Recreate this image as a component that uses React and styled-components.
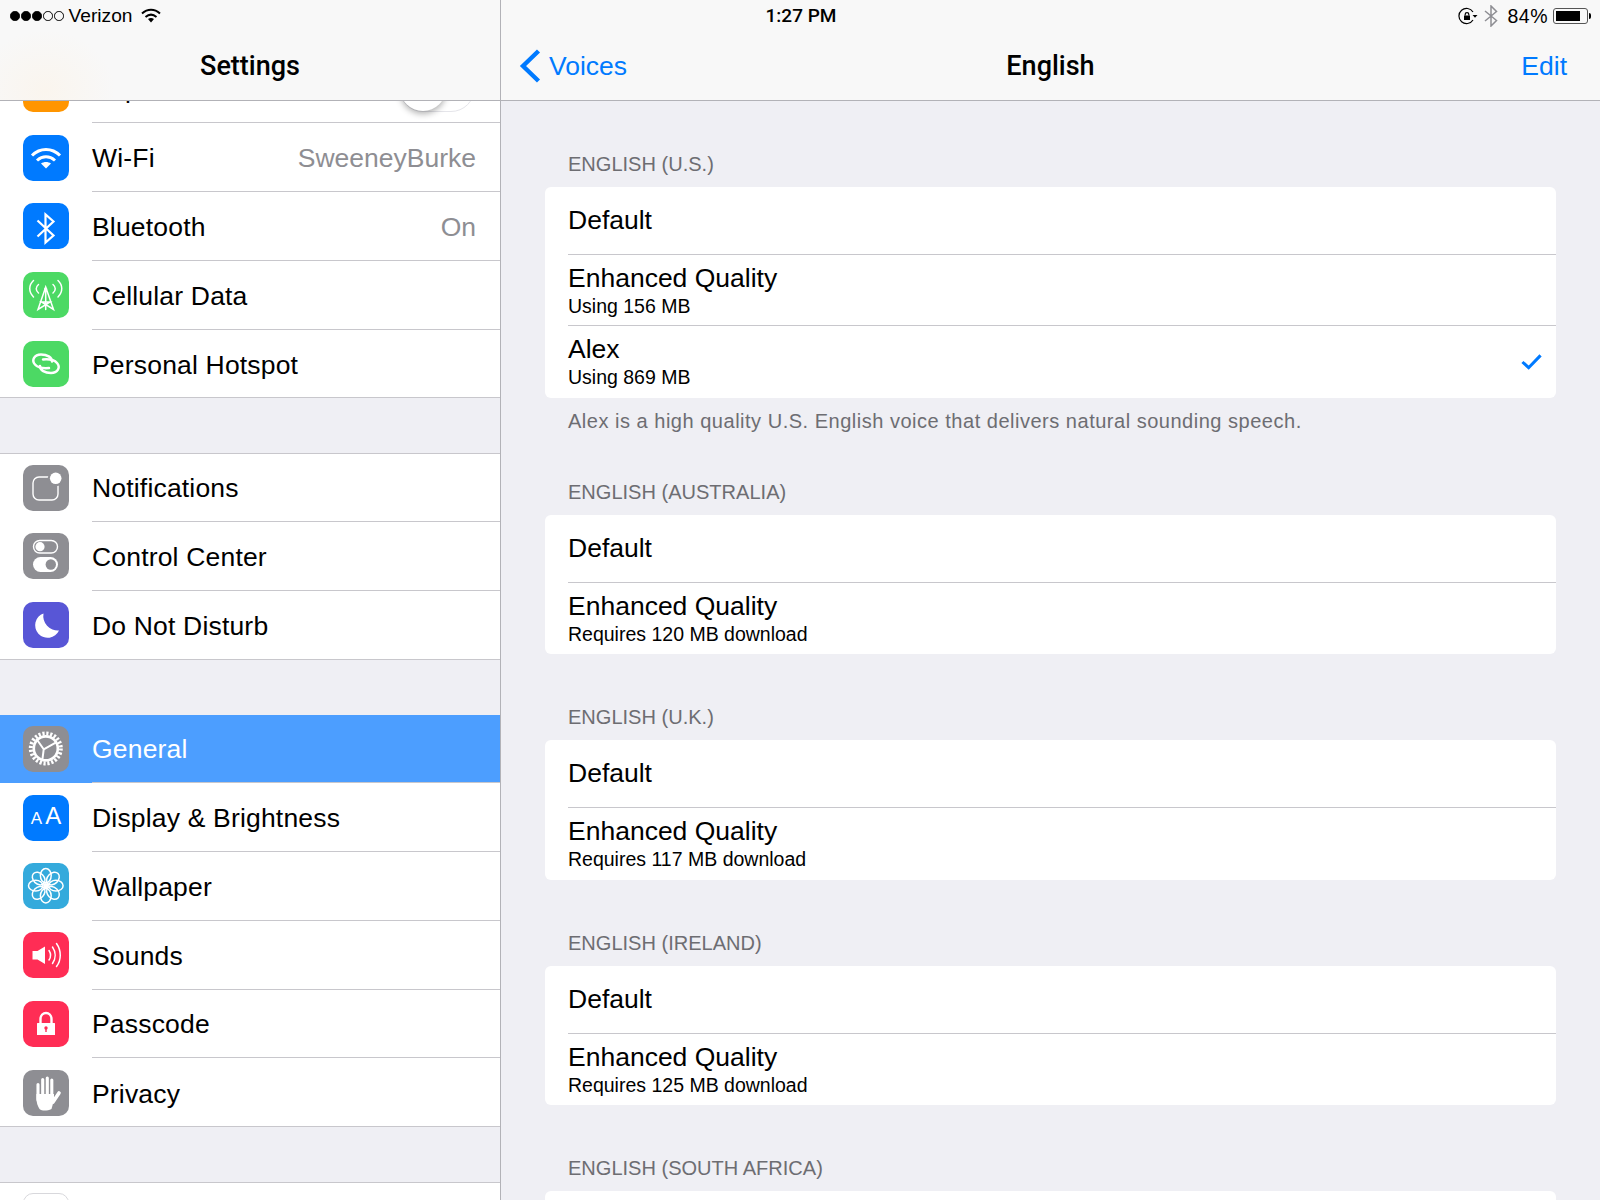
import React from 'react'
import styled, { createGlobalStyle } from 'styled-components'

const GlobalStyle = createGlobalStyle`
  html, body { margin: 0; padding: 0; background: #efeff4; }
  * { box-sizing: border-box; }
  body { font-family: "Liberation Sans", Arial, sans-serif; color: #000; }
`

const WifiGlyph = ({ size = 46 }) => (
  <svg width={size} height={size} viewBox="0 0 46 46" fill="none" stroke="#fff" strokeWidth="3">
    <path d="M9 20.5 C17 12.5 29 12.5 37 20.5" />
    <path d="M14 25.5 C19.5 20.5 26.5 20.5 32 25.5" />
    <path d="M18 28.5 C21 26.5 25 26.5 28 28.5 L23 33.5 Z" fill="#fff" stroke="none" />
  </svg>
)

const BluetoothGlyph = () => (
  <svg width="46" height="46" viewBox="0 0 46 46" fill="none" stroke="#fff" strokeWidth="2.2">
    <path d="M14.5 17.5 L30.5 32.5 L22.5 39.5 V11.5 L30.5 18.5 L14.5 33.5" />
  </svg>
)

const CellularGlyph = () => (
  <svg width="46" height="46" viewBox="0 0 46 46" fill="none" stroke="#fff" strokeWidth="1.5" strokeLinecap="round">
    <path d="M10.5 8.5 C5.5 13 5.5 20 10.5 25" />
    <path d="M35 8.5 C40 13 40 20 35 25" />
    <path d="M15.5 12.5 C12.5 15 12.5 18.5 15.5 21" />
    <path d="M30 12.5 C33 15 33 18.5 30 21" />
    <path d="M22.7 15 L15 37.5 L27 30 H18.5 L30.5 37.5 Z M22.7 15 V37.5" />
    <circle cx="22.7" cy="17" r="1.6" fill="#fff" stroke="none" />
  </svg>
)

const HotspotGlyph = () => (
  <svg width="46" height="46" viewBox="0 0 46 46" fill="none" stroke="#fff" strokeWidth="2.5" strokeLinecap="round">
    <path d="M26 27 C20 27.5 15 27 12 23.5 C8 19 11.5 13.5 18 13.5 C24 13.5 29 16 29 20.5" />
    <path d="M20 18.5 C26 18 31 18.5 34 22 C38 26.5 34.5 32 28 32 C22 32 17 29.5 17 25" />
  </svg>
)

const NotificationsGlyph = () => (
  <svg width="46" height="46" viewBox="0 0 46 46" fill="none">
    <rect x="10" y="12" width="25" height="23" rx="6" stroke="#fff" strokeWidth="1.4" />
    <circle cx="32.7" cy="13.3" r="8" fill="#8e8e93" />
    <circle cx="32.7" cy="13.3" r="5.8" fill="#fff" />
  </svg>
)

const ControlGlyph = () => (
  <svg width="46" height="46" viewBox="0 0 46 46" fill="none">
    <rect x="10.5" y="7.5" width="24" height="12.5" rx="6.25" stroke="#fff" strokeWidth="1.4" />
    <circle cx="17" cy="13.7" r="4.6" fill="#fff" />
    <rect x="10" y="24" width="25" height="15" rx="7.5" fill="#fff" />
    <circle cx="27.8" cy="31.5" r="5.2" fill="#8e8e93" />
  </svg>
)

const MoonGlyph = () => (
  <svg width="46" height="46" viewBox="0 0 46 46">
    <path d="M20.5 11.5 A12.5 12.5 0 1 0 36 28.5 A14.5 14.5 0 0 1 20.5 11.5 Z" fill="#fff" />
  </svg>
)

const GearGlyph = () => (
  <svg width="46" height="46" viewBox="0 0 46 46" fill="none" stroke="#fff">
    <circle cx="22.8" cy="22.4" r="15" strokeWidth="4" strokeDasharray="2.2 1.73" />
    <circle cx="22.8" cy="22.4" r="12" strokeWidth="2.6" />
    <path d="M20.7 23.3 L32.7 16.7 M20.7 23.3 L19.3 34.3 M20.7 23.3 L13.3 12.7" strokeWidth="2" />
  </svg>
)

const FlowerGlyph = () => (
  <svg width="46" height="46" viewBox="0 0 46 46" fill="none" stroke="#fff" strokeWidth="1.5">
    {[0, 45, 90, 135, 180, 225, 270, 315].map(a => (
      <ellipse key={a} cx="22.8" cy="12.6" rx="5.4" ry="7.2" transform={`rotate(${a} 22.8 22.7)`} />
    ))}
    <circle cx="22.8" cy="22.7" r="2.6" fill="#fff" stroke="none" />
  </svg>
)

const SoundGlyph = () => (
  <svg width="46" height="46" viewBox="0 0 46 46" fill="none" stroke="#fff" strokeWidth="1.5" strokeLinecap="round">
    <path d="M9.5 19 H14.5 L22 14.5 V32 L14.5 27.5 H9.5 Z" fill="#fff" stroke="none" />
    <path d="M26 18.5 C28 21.5 28 25 26 28" />
    <path d="M29.5 15 C33 20 33 26.5 29.5 31.5" />
    <path d="M33.5 11.5 C38.5 18.5 38.5 28 33.5 34.5" />
  </svg>
)

const LockGlyph = () => (
  <svg width="46" height="46" viewBox="0 0 46 46" fill="none">
    <path d="M17.5 23 V18 C17.5 10 28.5 10 28.5 18 V23" stroke="#fff" strokeWidth="2.4" />
    <rect x="14" y="22" width="18" height="12" rx="0.6" fill="#fff" />
    <circle cx="23" cy="27" r="1.7" fill="#ff2d55" />
    <rect x="22.3" y="27" width="1.4" height="4" fill="#ff2d55" />
  </svg>
)

const HandGlyph = () => (
  <svg width="46" height="46" viewBox="0 0 46 46" fill="none" stroke="#fff" strokeWidth="3.1" strokeLinecap="round">
    <path d="M15 14.5 V30 M19.7 9.5 V26 M24.3 8 V26 M28.8 10 V27" />
    <path d="M30 32 L36 23" strokeWidth="3.6" />
    <path d="M13.4 24 H31 V30 L28.5 39 C24 41 19 41 16.5 39 C14.5 36 13.4 32 13.4 28 Z" fill="#fff" stroke="none" />
  </svg>
)

const AaGlyph = () => <AaMark>A<b>A</b></AaMark>

const rowsTop = [
  { label: 'Wi-Fi', color: '#007aff', glyph: <WifiGlyph />, detail: 'SweeneyBurke' },
  { label: 'Bluetooth', color: '#007aff', glyph: <BluetoothGlyph />, detail: 'On' },
  { label: 'Cellular Data', color: '#4cd964', glyph: <CellularGlyph /> },
  { label: 'Personal Hotspot', color: '#4cd964', glyph: <HotspotGlyph /> },
]

const rowsMiddle = [
  { label: 'Notifications', color: '#8e8e93', glyph: <NotificationsGlyph /> },
  { label: 'Control Center', color: '#8e8e93', glyph: <ControlGlyph /> },
  { label: 'Do Not Disturb', color: '#5856d6', glyph: <MoonGlyph /> },
]

const rowsBottom = [
  { label: 'General', color: '#8e8e93', glyph: <GearGlyph />, selected: true },
  { label: 'Display & Brightness', color: '#007aff', glyph: <AaGlyph /> },
  { label: 'Wallpaper', color: '#34aadc', glyph: <FlowerGlyph /> },
  { label: 'Sounds', color: '#ff2d55', glyph: <SoundGlyph /> },
  { label: 'Passcode', color: '#ff2d55', glyph: <LockGlyph /> },
  { label: 'Privacy', color: '#8e8e93', glyph: <HandGlyph /> },
]

const sections = [
  {
    title: 'ENGLISH (U.S.)',
    voices: [
      { name: 'Default' },
      { name: 'Enhanced Quality', note: 'Using 156 MB' },
      { name: 'Alex', note: 'Using 869 MB', checked: true },
    ],
    footer: 'Alex is a high quality U.S. English voice that delivers natural sounding speech.',
  },
  {
    title: 'ENGLISH (AUSTRALIA)',
    voices: [{ name: 'Default' }, { name: 'Enhanced Quality', note: 'Requires 120 MB download' }],
  },
  {
    title: 'ENGLISH (U.K.)',
    voices: [{ name: 'Default' }, { name: 'Enhanced Quality', note: 'Requires 117 MB download' }],
  },
  {
    title: 'ENGLISH (IRELAND)',
    voices: [{ name: 'Default' }, { name: 'Enhanced Quality', note: 'Requires 125 MB download' }],
  },
  {
    title: 'ENGLISH (SOUTH AFRICA)',
    voices: [{ name: 'Default' }],
  },
]

const SettingsGroup = ({ rows }) => (
  <Group>
    {rows.map(row => (
      <Row key={row.label} $selected={row.selected}>
        <IconTile $color={row.color}>{row.glyph}</IconTile>
        <RowBody>
          <RowLabel>{row.label}</RowLabel>
          {row.detail && <RowDetail>{row.detail}</RowDetail>}
        </RowBody>
      </Row>
    ))}
  </Group>
)

const App = () => {
  return (
    <Screen>
      <GlobalStyle />
      <StatusBar>
        <StatusLeft>
          <Dot /><Dot /><Dot /><Dot $off /><Dot $off />
          <Carrier>Verizon</Carrier>
          <svg width="22" height="18" viewBox="0 0 22 18" fill="none" stroke="#000" strokeWidth="2">
            <path d="M2 6.5 C7.5 1.5 14.5 1.5 20 6.5" />
            <path d="M5.5 10 C9 7 13 7 16.5 10" />
            <path d="M8 12 C10 10.6 12 10.6 14 12 L11 15.5 Z" fill="#000" stroke="none" />
          </svg>
        </StatusLeft>
        <Clock>1:27 PM</Clock>
        <StatusRight>
          <RotationIcon width="20" height="18" viewBox="0 0 20 18" fill="none" stroke="#000" strokeWidth="1.2">
            <path d="M15 13 A7.6 7.6 0 1 1 15 5" />
            <path d="M14.5 8 H19.5 L17 10.8 Z" fill="#000" stroke="none" />
            <rect x="6" y="8.5" width="6" height="4.5" fill="#000" stroke="none" />
            <path d="M7.2 8.5 V7.2 C7.2 5.2 10.8 5.2 10.8 7.2 V8.5" />
          </RotationIcon>
          <svg width="14" height="22" viewBox="0 0 14 22" fill="none" stroke="#8e8e93" strokeWidth="1.5">
            <path d="M1 6 L12.5 15.5 L7 21 V1 L12.5 6.5 L1 16" />
          </svg>
          <Percent>84%</Percent>
          <Battery>
            <BatteryFill style={{ width: '84%' }} />
          </Battery>
        </StatusRight>
      </StatusBar>

      <Sidebar>
        <Nav $tinted>
          <NavTitle>Settings</NavTitle>
        </Nav>
        <SidebarScroll>
          <Group>
            <Row>
              <IconTile $color="#ff9500" />
              <RowBody>
                <RowLabel>Airplane Mode</RowLabel>
                <Switch />
              </RowBody>
            </Row>
            {rowsTop.map(row => (
              <Row key={row.label}>
                <IconTile $color={row.color}>{row.glyph}</IconTile>
                <RowBody>
                  <RowLabel>{row.label}</RowLabel>
                  {row.detail && <RowDetail>{row.detail}</RowDetail>}
                </RowBody>
              </Row>
            ))}
          </Group>
          <SettingsGroup rows={rowsMiddle} />
          <SettingsGroup rows={rowsBottom} />
          <Group>
            <Row>
              <IconTile $color="#fff" $outlined />
              <RowBody>
                <RowLabel>iCloud</RowLabel>
              </RowBody>
            </Row>
          </Group>
        </SidebarScroll>
      </Sidebar>

      <Detail>
        <Nav>
          <BackLink>
            <svg width="22" height="34" viewBox="0 0 22 34" fill="none" stroke="#007aff" strokeWidth="4.4">
              <path d="M19.5 2 L4 17 L19.5 32" />
            </svg>
            Voices
          </BackLink>
          <NavTitle>English</NavTitle>
          <EditLink>Edit</EditLink>
        </Nav>
        <DetailScroll>
          {sections.map(section => (
            <section key={section.title}>
              <SectionLabel>{section.title}</SectionLabel>
              <Card>
                {section.voices.map(voice => (
                  <VoiceRow key={voice.name} $tall={!!voice.note}>
                    <div>
                      <VoiceName>{voice.name}</VoiceName>
                      {voice.note && <VoiceNote>{voice.note}</VoiceNote>}
                    </div>
                    {voice.checked && (
                      <svg width="21" height="18" viewBox="0 0 22 18" fill="none" stroke="#007aff" strokeWidth="3.2">
                        <path d="M1.5 9 L8 15 L20.5 2" />
                      </svg>
                    )}
                  </VoiceRow>
                ))}
              </Card>
              {section.footer && <SectionFooter>{section.footer}</SectionFooter>}
            </section>
          ))}
        </DetailScroll>
      </Detail>
    </Screen>
  )
}

const Screen = styled.div`
  position: relative;
  display: flex;
  width: 1600px;
  height: 1200px;
  overflow: hidden;
  background: #efeff4;
`

const StatusBar = styled.div`
  position: absolute;
  z-index: 3;
  top: 0;
  left: 0;
  right: 0;
  height: 32px;
  display: grid;
  grid-template-columns: 1fr auto 1fr;
  align-items: center;
  padding: 0 8px 0 10px;
  font-size: 19.5px;
`

const StatusLeft = styled.div`
  display: flex;
  align-items: center;
  gap: 1.5px;
`

const Dot = styled.span`
  width: 9.5px;
  height: 9.5px;
  border-radius: 50%;
  background: ${props => (props.$off ? 'transparent' : '#000')};
  border: 1px solid #000;
`

const Carrier = styled.span`
  margin: 0 6px 0 3.5px;
  font-size: 19.2px;
`

const Clock = styled.div`
  font-family: Roboto, "Liberation Sans", sans-serif;
  font-weight: 500;
  font-size: 19px;
  margin-top: -1px;
`

const StatusRight = styled.div`
  display: flex;
  align-items: center;
  justify-content: flex-end;
  gap: 9px;
`

const RotationIcon = styled.svg`
  margin-right: -3px;
`

const Percent = styled.span`
  letter-spacing: 0.5px;
  margin-right: -4px;
`

const Battery = styled.div`
  position: relative;
  width: 35px;
  height: 16px;
  padding: 2px;
  border: 1px solid #555;
  border-radius: 3px;
  margin-right: 4px;

  &::after {
    content: "";
    position: absolute;
    right: -4px;
    top: 4px;
    width: 2.5px;
    height: 6px;
    background: #000;
    border-radius: 0 2px 2px 0;
  }
`

const BatteryFill = styled.div`
  height: 100%;
  background: #000;
`

const Sidebar = styled.aside`
  position: relative;
  display: flex;
  flex-direction: column;
  flex: 0 0 501px;
  height: 100%;
  background: #efeff4;
  border-right: 1px solid #b2b2b7;
`

const Nav = styled.header`
  position: relative;
  z-index: 2;
  flex: 0 0 101px;
  display: flex;
  align-items: center;
  justify-content: space-between;
  padding: 32px 33px 0 18px;
  background: ${props =>
    props.$tinted
      ? 'radial-gradient(ellipse 70px 60px at 45px 90px, #faf5ee, #f8f8f8)'
      : '#f8f8f8'};
  border-bottom: 1px solid #b2b2b7;
`

const NavTitle = styled.h1`
  position: absolute;
  left: 0;
  right: 0;
  bottom: 18px;
  margin: 0;
  text-align: center;
  font-family: Roboto, "Liberation Sans", sans-serif;
  font-size: 27px;
  line-height: 32px;
  font-weight: 500;
  pointer-events: none;
`

const BackLink = styled.a`
  display: flex;
  align-items: center;
  gap: 8px;
  color: #007aff;
  font-size: 26.5px;
`

const EditLink = styled.a`
  color: #007aff;
  font-size: 26.5px;
`

const SidebarScroll = styled.div`
  flex: 1;
  min-height: 0;
  overflow: hidden;

  & > :first-child {
    margin-top: -46.45px;
  }
`

const Group = styled.div`
  background: #fff;
  box-shadow: inset 0 1px 0 #c8c7cc, inset 0 -1px 0 #c8c7cc;
  margin-bottom: 55px;
`

const Row = styled.div`
  display: flex;
  align-items: center;
  height: 68.75px;
  padding-left: 23px;
  color: ${props => (props.$selected ? '#fff' : '#000')};
  background: ${props => (props.$selected ? '#4c9eff' : 'transparent')};

  &:last-child > div:last-child {
    border-bottom: none;
  }
`

const IconTile = styled.span`
  flex: 0 0 46px;
  height: 46px;
  margin-right: 23px;
  border-radius: 10px;
  overflow: hidden;
  display: flex;
  align-items: center;
  justify-content: center;
  background: ${props => props.$color};
  border: ${props => (props.$outlined ? '1px solid #d8d8dc' : 'none')};
`

const AaMark = styled.span`
  color: #fff;
  font-size: 17px;
  line-height: 46px;
  display: flex;
  align-items: baseline;
  gap: 3px;

  b {
    font-weight: normal;
    font-size: 24px;
  }
`

const RowBody = styled.div`
  flex: 1;
  align-self: stretch;
  min-width: 0;
  display: flex;
  align-items: center;
  justify-content: space-between;
  padding: 3px 24px 0 0;
  border-bottom: 1px solid #c8c7cc;
`

const RowLabel = styled.span`
  font-size: 26.5px;
  letter-spacing: 0.18px;
`

const RowDetail = styled.span`
  font-size: 26.5px;
  color: #8e8e93;
`

const Switch = styled.span`
  position: relative;
  width: 76px;
  height: 48px;
  margin-top: -4px;
  margin-right: 1px;
  border: 1px solid #e5e5ea;
  border-radius: 24px;

  &::before {
    content: "";
    position: absolute;
    left: 0;
    top: 0;
    width: 46px;
    height: 46px;
    border-radius: 50%;
    background: #fff;
    box-shadow: 0 3px 6px rgba(0, 0, 0, 0.3);
  }
`

const Detail = styled.main`
  flex: 1;
  min-width: 0;
  display: flex;
  flex-direction: column;
`

const DetailScroll = styled.div`
  flex: 1;
  min-height: 0;
  overflow: hidden;
  padding: 0 44px 0 44px;
`

const SectionLabel = styled.h2`
  display: flex;
  align-items: flex-end;
  height: 86px;
  margin: 0;
  padding: 0 0 8px 23px;
  font-size: 20.05px;
  line-height: 30px;
  font-weight: normal;
  color: #6d6d72;
`

const Card = styled.div`
  background: #fff;
  border-radius: 6px;
  overflow: hidden;
`

const VoiceRow = styled.div`
  display: flex;
  align-items: ${props => (props.$tall ? 'flex-start' : 'center')};
  justify-content: space-between;
  height: ${props => (props.$tall ? '71.25px' : '68px')};
  margin-left: 23px;
  padding: ${props => (props.$tall ? '7px 14px 0 0' : '0 14px 1px 0')};
  border-bottom: 1px solid #c8c7cc;

  &:last-child {
    border-bottom: none;
  }

  & > svg {
    align-self: center;
    margin-top: -7px;
  }
`

const VoiceName = styled.div`
  font-size: 26.5px;
  line-height: 32px;
`

const VoiceNote = styled.div`
  font-size: 19.5px;
  line-height: 24px;
`

const SectionFooter = styled.p`
  height: 31.5px;
  margin: 0;
  padding-left: 23px;
  font-size: 20.05px;
  letter-spacing: 0.5px;
  line-height: 46px;
  color: #6d6d72;
`

export default App
